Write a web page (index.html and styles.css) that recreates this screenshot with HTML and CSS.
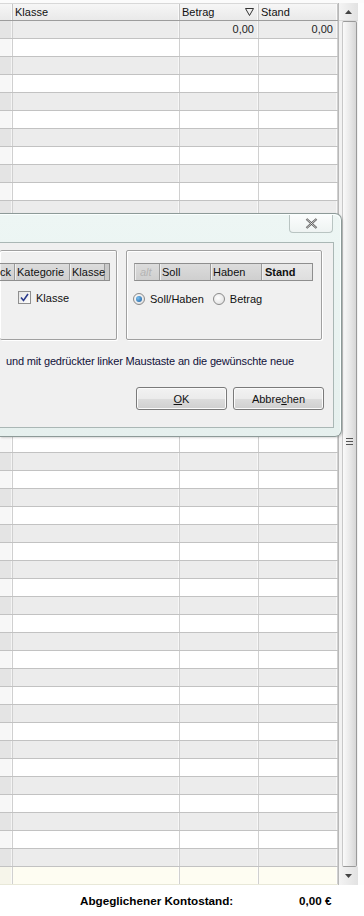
FILE: index.html
```html
<!DOCTYPE html>
<html lang="de">
<head>
<meta charset="utf-8">
<title>Konto</title>
<link rel="stylesheet" href="styles.css">
</head>
<body>
<div class="app">
  <div class="topgap"></div>
  <div class="main">
    <div class="grid">
      <div class="head">
        <div class="hc c0"></div>
        <div class="hc c1">Klasse</div>
        <div class="hc c2">Betrag<svg class="filter" width="9" height="8" viewBox="0 0 9 8"><path d="M0.5 0.5 H8.5 L4.5 7.5 Z" fill="none" stroke="#333" stroke-width="1"/></svg></div>
        <div class="hc c3">Stand</div>
      </div>
      <div class="body">
        <div class="row"><div class="c0"></div><div class="c1"></div><div class="c2 num">0,00</div><div class="c3 num">0,00</div></div>
        <div class="row"><div class="c0"></div><div class="c1"></div><div class="c2"></div><div class="c3"></div></div>
        <div class="row"><div class="c0"></div><div class="c1"></div><div class="c2"></div><div class="c3"></div></div>
        <div class="row"><div class="c0"></div><div class="c1"></div><div class="c2"></div><div class="c3"></div></div>
        <div class="row"><div class="c0"></div><div class="c1"></div><div class="c2"></div><div class="c3"></div></div>
        <div class="row"><div class="c0"></div><div class="c1"></div><div class="c2"></div><div class="c3"></div></div>
        <div class="row"><div class="c0"></div><div class="c1"></div><div class="c2"></div><div class="c3"></div></div>
        <div class="row"><div class="c0"></div><div class="c1"></div><div class="c2"></div><div class="c3"></div></div>
        <div class="row"><div class="c0"></div><div class="c1"></div><div class="c2"></div><div class="c3"></div></div>
        <div class="row"><div class="c0"></div><div class="c1"></div><div class="c2"></div><div class="c3"></div></div>
        <div class="row"><div class="c0"></div><div class="c1"></div><div class="c2"></div><div class="c3"></div></div>
        <div class="row"><div class="c0"></div><div class="c1"></div><div class="c2"></div><div class="c3"></div></div>
        <div class="row"><div class="c0"></div><div class="c1"></div><div class="c2"></div><div class="c3"></div></div>
        <div class="row"><div class="c0"></div><div class="c1"></div><div class="c2"></div><div class="c3"></div></div>
        <div class="row"><div class="c0"></div><div class="c1"></div><div class="c2"></div><div class="c3"></div></div>
        <div class="row"><div class="c0"></div><div class="c1"></div><div class="c2"></div><div class="c3"></div></div>
        <div class="row"><div class="c0"></div><div class="c1"></div><div class="c2"></div><div class="c3"></div></div>
        <div class="row"><div class="c0"></div><div class="c1"></div><div class="c2"></div><div class="c3"></div></div>
        <div class="row"><div class="c0"></div><div class="c1"></div><div class="c2"></div><div class="c3"></div></div>
        <div class="row"><div class="c0"></div><div class="c1"></div><div class="c2"></div><div class="c3"></div></div>
        <div class="row"><div class="c0"></div><div class="c1"></div><div class="c2"></div><div class="c3"></div></div>
        <div class="row"><div class="c0"></div><div class="c1"></div><div class="c2"></div><div class="c3"></div></div>
        <div class="row"><div class="c0"></div><div class="c1"></div><div class="c2"></div><div class="c3"></div></div>
        <div class="row"><div class="c0"></div><div class="c1"></div><div class="c2"></div><div class="c3"></div></div>
        <div class="row"><div class="c0"></div><div class="c1"></div><div class="c2"></div><div class="c3"></div></div>
        <div class="row"><div class="c0"></div><div class="c1"></div><div class="c2"></div><div class="c3"></div></div>
        <div class="row"><div class="c0"></div><div class="c1"></div><div class="c2"></div><div class="c3"></div></div>
        <div class="row"><div class="c0"></div><div class="c1"></div><div class="c2"></div><div class="c3"></div></div>
        <div class="row"><div class="c0"></div><div class="c1"></div><div class="c2"></div><div class="c3"></div></div>
        <div class="row"><div class="c0"></div><div class="c1"></div><div class="c2"></div><div class="c3"></div></div>
        <div class="row"><div class="c0"></div><div class="c1"></div><div class="c2"></div><div class="c3"></div></div>
        <div class="row"><div class="c0"></div><div class="c1"></div><div class="c2"></div><div class="c3"></div></div>
        <div class="row"><div class="c0"></div><div class="c1"></div><div class="c2"></div><div class="c3"></div></div>
        <div class="row"><div class="c0"></div><div class="c1"></div><div class="c2"></div><div class="c3"></div></div>
        <div class="row"><div class="c0"></div><div class="c1"></div><div class="c2"></div><div class="c3"></div></div>
        <div class="row"><div class="c0"></div><div class="c1"></div><div class="c2"></div><div class="c3"></div></div>
        <div class="row"><div class="c0"></div><div class="c1"></div><div class="c2"></div><div class="c3"></div></div>
        <div class="row"><div class="c0"></div><div class="c1"></div><div class="c2"></div><div class="c3"></div></div>
        <div class="row"><div class="c0"></div><div class="c1"></div><div class="c2"></div><div class="c3"></div></div>
        <div class="row"><div class="c0"></div><div class="c1"></div><div class="c2"></div><div class="c3"></div></div>
        <div class="row"><div class="c0"></div><div class="c1"></div><div class="c2"></div><div class="c3"></div></div>
        <div class="row"><div class="c0"></div><div class="c1"></div><div class="c2"></div><div class="c3"></div></div>
        <div class="row"><div class="c0"></div><div class="c1"></div><div class="c2"></div><div class="c3"></div></div>
        <div class="row"><div class="c0"></div><div class="c1"></div><div class="c2"></div><div class="c3"></div></div>
        <div class="row"><div class="c0"></div><div class="c1"></div><div class="c2"></div><div class="c3"></div></div>
        <div class="row"><div class="c0"></div><div class="c1"></div><div class="c2"></div><div class="c3"></div></div>
        <div class="row"><div class="c0"></div><div class="c1"></div><div class="c2"></div><div class="c3"></div></div>
        <div class="row last"><div class="c0"></div><div class="c1"></div><div class="c2"></div><div class="c3"></div></div>
      </div>
    </div>
    <div class="vscroll">
      <div class="sbtn up"><svg width="7" height="4" viewBox="0 0 7 4"><path d="M0 4 L3.5 0 L7 4 Z" fill="#444"/></svg></div>
      <div class="track">
        <div class="thumb"><span class="grip"></span></div>
      </div>
      <div class="sbtn down"><svg width="7" height="4" viewBox="0 0 7 4"><path d="M0 0 L3.5 4 L7 0 Z" fill="#444"/></svg></div>
    </div>
    <div class="gutter"></div>
  </div>
  <div class="footer">
    <span class="flabel">Abgeglichener Kontostand:</span>
    <span class="fvalue">0,00 €</span>
  </div>

  <div class="dialog">
    <div class="titlebar">
      <div class="close"><svg width="13" height="11" viewBox="0 0 13 11"><path d="M1.5 1 L11.5 10 M11.5 1 L1.5 10" stroke="#555" stroke-width="2.2" fill="none"/><path d="M1.5 1 L11.5 10 M11.5 1 L1.5 10" stroke="#ececec" stroke-width="0.8" fill="none"/></svg></div>
    </div>
    <div class="client">
      <div class="groups">
        <div class="group gleft">
          <div class="strip">
            <div class="sc sc-a">ck</div>
            <div class="sc sc-b">Kategorie</div>
            <div class="sc sc-c">Klasse</div>
          </div>
          <label class="opt chk-row"><span class="checkbox"><svg width="9" height="9" viewBox="0 0 9 9"><path d="M1 4.5 L3.5 7.5 L8 1" stroke="#2a3a8c" stroke-width="1.6" fill="none"/></svg></span>Klasse</label>
        </div>
        <div class="group gright">
          <div class="strip">
            <div class="sc sc-d">alt</div>
            <div class="sc sc-e">Soll</div>
            <div class="sc sc-f">Haben</div>
            <div class="sc sc-g">Stand</div>
          </div>
          <div class="radios">
            <label class="opt"><span class="radio on"><span class="dot"></span></span>Soll/Haben</label>
            <label class="opt"><span class="radio"></span>Betrag</label>
          </div>
        </div>
      </div>
      <p class="hint">und mit gedrückter linker Maustaste an die gewünschte neue</p>
      <div class="buttons">
        <div class="btn"><u>O</u>K</div>
        <div class="btn">Abbre<u>c</u>hen</div>
      </div>
    </div>
  </div>
</div>
</body>
</html>
```

FILE: styles.css
```css
* { box-sizing: border-box; }
html, body { margin: 0; padding: 0; }
body {
  width: 364px;
  height: 916px;
  overflow: hidden;
  background: #ffffff;
  font-family: "Liberation Sans", Arial, sans-serif;
  font-size: 11px;
  color: #111;
}
.app {
  position: relative;
  width: 364px;
  height: 916px;
  display: flex;
  flex-direction: column;
}
.topgap { height: 3px; background: #fbfbfb; }
.main { display: flex; height: 882px; }
.grid { width: 338px; display: flex; flex-direction: column; }
.head {
  display: flex;
  height: 18px;
  background: linear-gradient(#f6f6f6, #e9e9e9);
  border-top: 1px solid #d8d8d8;
  border-bottom: 1px solid #9c9c9c;
}
.hc {
  height: 100%;
  line-height: 16px;
  padding-left: 2px;
  border-right: 1px solid #c6c6c6;
  box-shadow: inset -1px 0 #fafafa;
  white-space: nowrap;
  color: #111;
}
.hc.c2 { display: flex; align-items: center; justify-content: space-between; padding-right: 4px; }
.filter { display: block; }
.c0 { width: 13px; flex: none; }
.c1 { width: 167px; flex: none; }
.c2 { width: 79px; flex: none; }
.c3 { width: 79px; flex: none; }
.body { display: flex; flex-direction: column; }
.row {
  display: flex;
  height: 18px;
  border-bottom: 1px solid #c2c2c2;
  background: #ffffff;
}
.row:nth-child(odd) { background: #ececec; }
.row.last { background: #fefdf2; border-bottom: 1px solid #e8e8d8; }
.row > div {
  height: 100%;
  border-right: 1px solid #d0d0d0;
  box-shadow: inset -1px 0 rgba(255,255,255,0.6);
}
.row > .c0 { background: rgba(0,0,0,0.03); }
.num { text-align: right; padding-right: 4px; line-height: 17px; color: #222; }

.vscroll {
  width: 20px;
  display: flex;
  flex-direction: column;
  border-left: 1px solid #b8b8b8;
  background: #f2f2f2;
}
.sbtn {
  height: 18px;
  display: flex;
  align-items: center;
  justify-content: center;
  background: linear-gradient(90deg, #f4f4f4, #e2e2e2);
}
.sbtn.up { border-bottom: 1px solid #dcdcdc; }
.track { flex: 1; padding: 0 1px 0 3px; display: flex; }
.thumb {
  flex: 1;
  border: 1px solid #9a9a9a;
  border-left-color: #c8c8c8;
  border-radius: 2px;
  background: linear-gradient(90deg, #fafafa, #e6e6e6 60%, #d6d6d6);
  display: flex;
  align-items: center;
  justify-content: center;
}
.grip {
  width: 7px;
  height: 7px;
  background: repeating-linear-gradient(#555 0 1px, transparent 1px 3px);
  margin-top: -6px;
}
.gutter { width: 6px; background: #fdfdfd; }

.footer {
  height: 31px;
  display: flex;
  align-items: center;
  background: #ffffff;
  font-weight: bold;
  color: #000;
  font-size: 11.7px;
  padding-left: 80px;
}
.flabel { width: 219px; }

/* dialog overlay */
.dialog {
  position: absolute;
  left: 0;
  top: 213px;
  width: 342px;
  height: 224px;
  background: linear-gradient(#edf6f4, #e6f0ee);
  border: 1px solid #8d9a98;
  border-left: none;
  border-radius: 0 7px 7px 0;
  box-shadow: inset -1px 1px #fafffe, 1px 1px 2px rgba(0,0,0,0.15);
  padding: 0 7px 8px 0;
  display: flex;
  flex-direction: column;
}
.titlebar {
  height: 28px;
  display: flex;
  justify-content: flex-end;
  align-items: flex-start;
  padding-top: 1px;
  padding-right: 1px;
}
.close {
  width: 44px;
  height: 18px;
  border: 1px solid #b9c4c2;
  border-top: none;
  border-radius: 0 0 4px 4px;
  background: linear-gradient(#fbfdfd, #eef3f2);
  display: flex;
  align-items: center;
  justify-content: center;
}
.client {
  flex: 1;
  background: #f0f0f0;
  border: 1px solid #aab7b5;
  border-left: none;
  display: flex;
  flex-direction: column;
  position: relative;
}
.groups {
  display: flex;
  gap: 9px;
  padding-top: 7px;
  height: 98px;
}
.group {
  height: 90px;
  border: 1px solid #a0a0a0;
  box-shadow: inset 1px 1px #ffffff, 1px 1px #ffffff;
  border-radius: 2px;
}
.gleft {
  width: 117px;
  border-left: none;
  padding: 12px 6px 0 0;
}
.gright {
  width: 196px;
  padding: 12px 8px 0 7px;
}
.strip {
  height: 18px;
  display: flex;
  background: #c9c9c9;
  border: 1px solid #8e8e8e;
  border-left-color: #a8a8a8;
}
.gleft .strip { border-left: none; }
.sc {
  height: 100%;
  line-height: 16px;
  padding-left: 2px;
  border-right: 1px solid #9a9a9a;
  background: linear-gradient(#dcdcdc, #cfcfcf);
  box-shadow: inset 1px 0 #eeeeee;
  white-space: nowrap;
  color: #111;
}
.sc-a { width: 15px; padding-left: 0; }
.sc-b { width: 55px; }
.sc-c { width: 35px; }
.sc-d { width: 25px; color: #b4b4b4; font-style: italic; padding-left: 5px; }
.sc-e { width: 51px; }
.sc-f { width: 51px; }
.sc-g { width: 50px; font-weight: bold; background: linear-gradient(#e8e8e8, #dedede); padding-left: 3px; border-right: none; }

.opt {
  display: flex;
  align-items: center;
  gap: 5px;
  color: #111;
  white-space: nowrap;
}
.chk-row { margin: 10px 0 0 18px; }
.checkbox {
  width: 13px;
  height: 13px;
  border: 1px solid #8f8f8f;
  background: linear-gradient(135deg, #e4e4e4, #fdfdfd);
  display: flex;
  align-items: center;
  justify-content: center;
}
.radios {
  display: flex;
  gap: 9px;
  margin: 12px 0 0 -1px;
}
.radio {
  width: 12px;
  height: 12px;
  border-radius: 50%;
  border: 1px solid #8a8a8a;
  background: radial-gradient(circle at 40% 40%, #ffffff, #dadada);
  display: flex;
  align-items: center;
  justify-content: center;
}
.dot {
  width: 6px;
  height: 6px;
  border-radius: 50%;
  background: radial-gradient(circle at 35% 35%, #7ac0f0, #1a5a9a);
}
.hint {
  margin: 13px 0 0 6px;
  line-height: 14px;
  letter-spacing: -0.15px;
  color: #10103a;
  white-space: nowrap;
}
.buttons {
  display: flex;
  justify-content: flex-end;
  gap: 6px;
  padding-right: 9px;
  margin-top: 19px;
}
.btn {
  width: 91px;
  height: 23px;
  border: 1px solid #7a7a7a;
  border-radius: 3px;
  background: linear-gradient(#f2f2f2 0%, #ebebeb 50%, #dddddd 51%, #cfcfcf 100%);
  box-shadow: inset 0 0 0 1px #fbfbfb;
  display: flex;
  align-items: center;
  justify-content: center;
  color: #111;
}
.btn u { text-decoration: underline; }
```
